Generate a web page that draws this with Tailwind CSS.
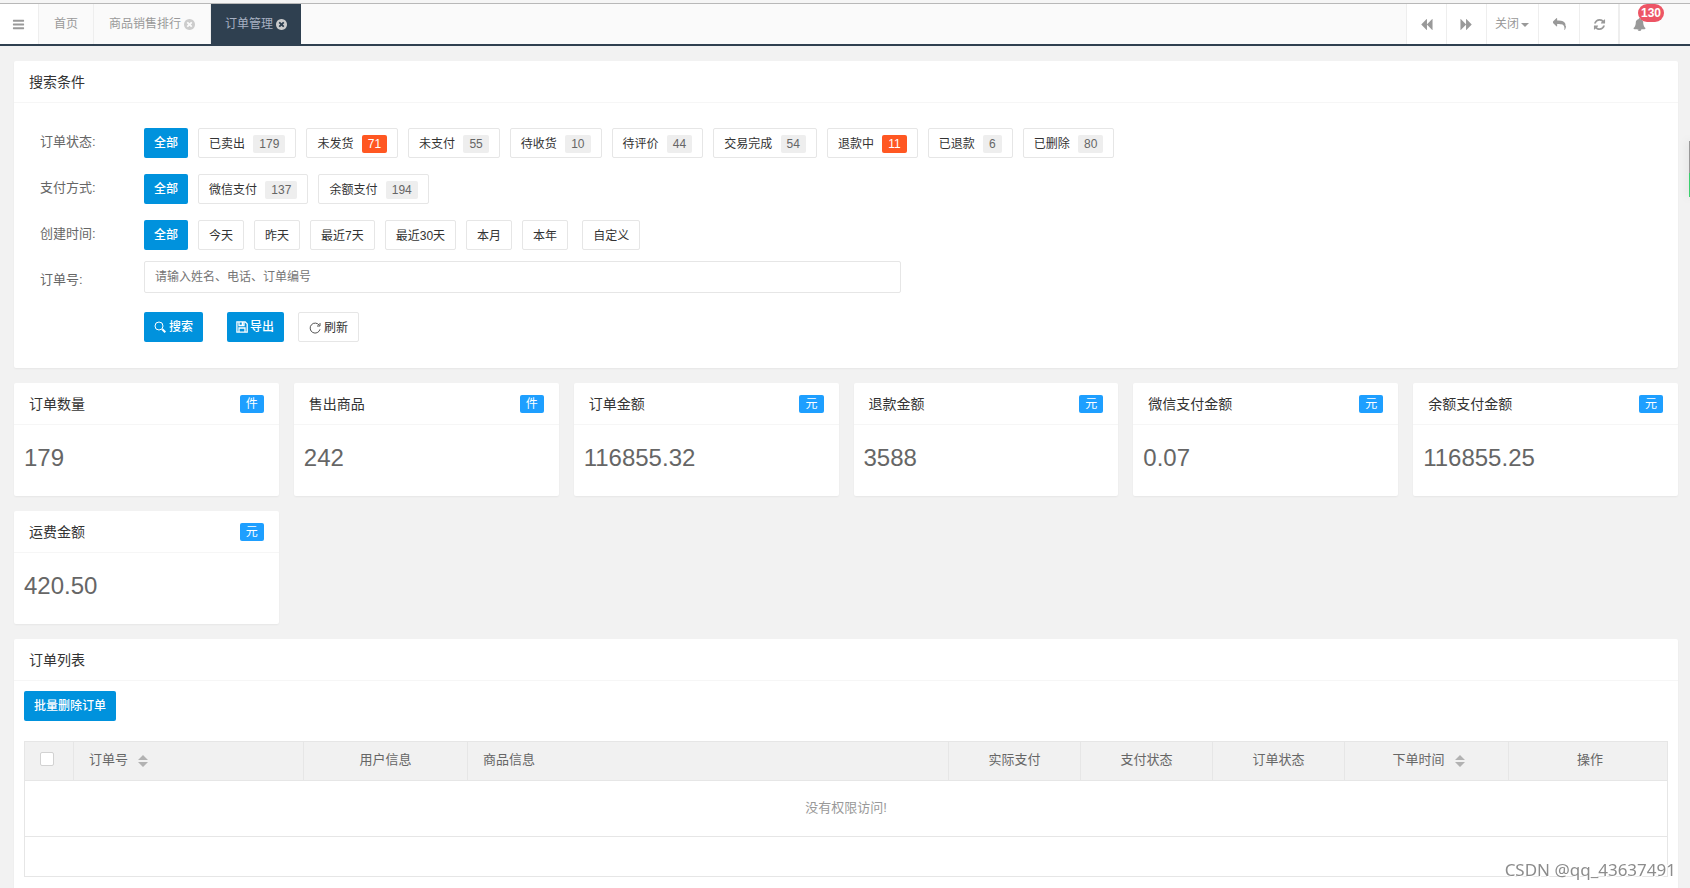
<!DOCTYPE html>
<html lang="zh-CN">
<head>
<meta charset="utf-8">
<meta name="viewport" content="width=device-width, initial-scale=1">
<title>订单管理</title>
<script src="https://cdn.jsdelivr.net/npm/@tailwindcss/browser@4"></script>
</head>
<body class="bg-[#f2f2f2] text-xs text-[#666] font-['Liberation_Sans','Noto_Sans_CJK_SC',sans-serif]">
<svg class="hidden" aria-hidden="true">
  <symbol id="close" viewBox="128 128 1536 1536"><path d="M1277 1122q0-26-19-45l-181-181 181-181q19-19 19-45 0-27-19-46l-90-90q-19-19-46-19-26 0-45 19l-181 181-181-181q-19-19-45-19-27 0-46 19l-90 90q-19 19-19 46 0 26 19 45l181 181-181 181q-19 19-19 45 0 27 19 46l90 90q19 19 46 19 26 0 45-19l181-181 181 181q19 19 45 19 27 0 46-19l90-90q19-19 19-46zm387-226q0 209-103 385.5t-279.5 279.5-385.5 103-385.5-103-279.5-279.5-103-385.5 103-385.5 279.5-279.5 385.5-103 385.5 103 279.5 279.5 103 385.5z"/></symbol>
  <symbol id="sort" viewBox="0 0 10 12"><path d="M5 0l5 5H0zM0 7h10l-5 5z"/></symbol>
</svg>
<div class="flex h-screen flex-col overflow-hidden">
  <header class="flex h-[46px] shrink-0 border-b-2 border-[#2f4050] bg-[#fafafa] text-[#999]">
    <div class="flex w-full flex-col">
      <div class="h-1 shrink-0 border-b border-[#b8b8b8] bg-[#f5f5f5]"></div>
      <div class="flex flex-1">
        <button aria-label="菜单" class="flex w-[39px] items-center border-r border-[#eee] bg-white pl-3">
          <svg class="size-[13px] fill-current" viewBox="0 0 1792 1792"><path d="M1664 1344v128q0 26-19 45t-45 19h-1408q-26 0-45-19t-19-45v-128q0-26 19-45t45-19h1408q26 0 45 19t19 45zm0-512v128q0 26-19 45t-45 19h-1408q-26 0-45-19t-19-45v-128q0-26 19-45t45-19h1408q26 0 45 19t19 45zm0-512v128q0 26-19 45t-45 19h-1408q-26 0-45-19t-19-45v-128q0-26 19-45t45-19h1408q26 0 45 19t19 45z"/></svg>
        </button>
        <nav class="flex flex-1">
          <a href="#" class="flex items-center border-r border-[#eee] px-[15px]">首页</a>
          <a href="#" class="flex items-center gap-[3px] border-r border-[#eee] px-[15px]">商品销售排行<svg class="size-[11px] fill-[#ccc]"><use href="#close"/></svg></a>
          <a href="#" class="flex items-center gap-[3px] bg-[#2f4050] px-3.5 text-[#a7b1c2]">订单管理<svg class="size-[11px] fill-[#ccc]"><use href="#close"/></svg></a>
        </nav>
        <div class="flex pr-[30px]">
          <button aria-label="向左" class="flex w-10 items-center justify-center border-l border-[#eee] bg-white"><svg class="size-[13px] fill-current" viewBox="0 0 1792 1792"><path d="M1683 141q19-19 32-13t13 32v1472q0 26-13 32t-32-13l-710-710q-9-9-13-19v710q0 26-13 32t-32-13l-710-710q-19-19-19-45t19-45l710-710q19-19 32-13t13 32v710q4-10 13-19z"/></svg></button>
          <button aria-label="向右" class="flex w-10 items-center justify-center border-l border-[#eee] bg-white"><svg class="size-[13px] fill-current" viewBox="0 0 1792 1792"><path d="M109 1651q-19 19-32 13t-13-32v-1472q0-26 13-32t32 13l710 710q9 9 13 19v-710q0-26 13-32t32 13l710 710q19 19 19 45t-19 45l-710 710q-19 19-32 13t-13-32v-710q-4 10-13 19z"/></svg></button>
          <button class="flex w-[52px] items-center gap-0.5 border-l border-[#eee] bg-white pl-2">关闭<svg class="mt-0.5 h-1 w-2 fill-current" viewBox="0 0 8 4"><path d="M0 0h8L4 4z"/></svg></button>
          <button aria-label="返回" class="flex w-[41px] items-center justify-center border-l border-[#eee] bg-white"><svg class="size-[13px] fill-current" viewBox="0 0 1792 1792"><path d="M1792 1120q0 166-127 451-3 7-10.5 24t-13.5 30-13 22q-12 17-28 17-15 0-23.5-10t-8.5-25q0-9 2.5-26.500t2.500-23.500q5-68 5-123 0-112-19.500-200.500t-54-153.500-89-112-117.500-77.500-146-43.500-167.500-20.500-189.500-5.500h-224v256q0 26-19 45t-45 19-45-19l-512-512q-19-19-19-45t19-45l512-512q19-19 45-19t45 19 19 45v256h224q713 0 875 403 53 134 53 333z"/></svg></button>
          <button aria-label="刷新页面" class="flex w-[39px] items-center justify-center border-l border-[#eee] bg-white"><svg class="size-[13px] fill-current" viewBox="0 0 1792 1792"><path d="M1639 1056q0 5-1 7-64 268-268 434.500t-478 166.500q-146 0-282.500-55t-243.500-157l-129 129q-19 19-45 19t-45-19-19-45v-448q0-26 19-45t45-19h448q26 0 45 19t19 45-19 45l-137 137q71 66 161 102t187 36q134 0 250-65t186-179q11-17 53-117 8-23 30-23h192q13 0 22.500 9.500t9.500 22.500zm25-800v448q0 26-19 45t-45 19h-448q-26 0-45-19t-19-45 19-45l138-138q-148-137-349-137-134 0-250 65t-186 179q-11 17-53 117-8 23-30 23h-199q-13 0-22.500-9.500t-9.500-22.500v-7q65-268 270-434.500t480-166.500q146 0 284 55.500t245 156.500l130-129q19-19 45-19t45 19 19 45z"/></svg></button>
          <button aria-label="通知" class="relative flex w-[42px] items-center border-l-2 border-[#eee] bg-white pl-[13px]"><svg class="size-[13px] fill-current" viewBox="0 0 1792 1792"><path d="M912 1696q0-16-16-16-59 0-101.500-42.500t-42.500-101.500q0-16-16-16t-16 16q0 73 51.500 124.500t124.500 51.500q16 0 16-16zm816-288q0 52-38 90t-90 38h-448q0 106-75 181t-181 75-181-75-75-181h-448q-52 0-90-38t-38-90q50-42 91-88t85-119.500 74.500-158.500 50-206 19.500-260q0-152 117-282.500t307-158.500q-8-19-8-39 0-40 28-68t68-28 68 28 28 68q0 20-8 39 190 28 307 158.500t117 282.500q0 139 19.500 260t50 206 74.500 158.500 85 119.500 91 88z"/></svg><span class="absolute top-0 -right-1 rounded-full bg-[#ed5565] px-[3px] text-xs leading-[18px] font-bold text-white">130</span></button>
        </div>
      </div>
    </div>
  </header>

  <main class="flex flex-1 flex-col gap-[15px] overflow-hidden pt-[15px] pr-3 pl-3.5">
    <section class="shrink-0 rounded-xs bg-white shadow-[0_1px_2px_rgba(0,0,0,0.05)]">
      <h2 class="h-[42px] border-b border-[#f6f6f6] px-[15px] text-sm leading-[42px] text-[#333]">搜索条件</h2>
      <form class="flex flex-col pt-[25px] pr-5 pb-[26px] pl-[26px]" onsubmit="return false">
        <div class="mb-4 flex">
          <span class="w-[104px] shrink-0 text-[13px] leading-7">订单状态:</span>
          <div class="flex flex-wrap gap-2.5">
            <button class="h-[30px] rounded-xs bg-[#0092dd] px-2.5 font-medium text-white">全部</button>
            <button class="h-[30px] rounded-xs border border-[#e6e6e6] px-2.5 pt-0.5 text-[#333]">已卖出 <span class="ml-[5px] inline-block rounded-xs bg-[#eee] px-1.5 leading-[18px] text-[#666]">179</span></button>
            <button class="h-[30px] rounded-xs border border-[#e6e6e6] px-2.5 pt-0.5 text-[#333]">未发货 <span class="ml-[5px] inline-block rounded-xs bg-[#ff5722] px-1.5 leading-[18px] text-white">71</span></button>
            <button class="h-[30px] rounded-xs border border-[#e6e6e6] px-2.5 pt-0.5 text-[#333]">未支付 <span class="ml-[5px] inline-block rounded-xs bg-[#eee] px-1.5 leading-[18px] text-[#666]">55</span></button>
            <button class="h-[30px] rounded-xs border border-[#e6e6e6] px-2.5 pt-0.5 text-[#333]">待收货 <span class="ml-[5px] inline-block rounded-xs bg-[#eee] px-1.5 leading-[18px] text-[#666]">10</span></button>
            <button class="h-[30px] rounded-xs border border-[#e6e6e6] px-2.5 pt-0.5 text-[#333]">待评价 <span class="ml-[5px] inline-block rounded-xs bg-[#eee] px-1.5 leading-[18px] text-[#666]">44</span></button>
            <button class="h-[30px] rounded-xs border border-[#e6e6e6] px-2.5 pt-0.5 text-[#333]">交易完成 <span class="ml-[5px] inline-block rounded-xs bg-[#eee] px-1.5 leading-[18px] text-[#666]">54</span></button>
            <button class="h-[30px] rounded-xs border border-[#e6e6e6] px-2.5 pt-0.5 text-[#333]">退款中 <span class="ml-[5px] inline-block rounded-xs bg-[#ff5722] px-1.5 leading-[18px] text-white">11</span></button>
            <button class="h-[30px] rounded-xs border border-[#e6e6e6] px-2.5 pt-0.5 text-[#333]">已退款 <span class="ml-[5px] inline-block rounded-xs bg-[#eee] px-1.5 leading-[18px] text-[#666]">6</span></button>
            <button class="h-[30px] rounded-xs border border-[#e6e6e6] px-2.5 pt-0.5 text-[#333]">已删除 <span class="ml-[5px] inline-block rounded-xs bg-[#eee] px-1.5 leading-[18px] text-[#666]">80</span></button>
          </div>
        </div>
        <div class="mb-4 flex">
          <span class="w-[104px] shrink-0 text-[13px] leading-7">支付方式:</span>
          <div class="flex flex-wrap gap-2.5">
            <button class="h-[30px] rounded-xs bg-[#0092dd] px-2.5 font-medium text-white">全部</button>
            <button class="h-[30px] rounded-xs border border-[#e6e6e6] px-2.5 pt-0.5 text-[#333]">微信支付 <span class="ml-[5px] inline-block rounded-xs bg-[#eee] px-1.5 leading-[18px] text-[#666]">137</span></button>
            <button class="h-[30px] rounded-xs border border-[#e6e6e6] px-2.5 pt-0.5 text-[#333]">余额支付 <span class="ml-[5px] inline-block rounded-xs bg-[#eee] px-1.5 leading-[18px] text-[#666]">194</span></button>
          </div>
        </div>
        <div class="mb-[11px] flex">
          <span class="w-[104px] shrink-0 text-[13px] leading-7">创建时间:</span>
          <div class="flex flex-wrap gap-2.5">
            <button class="h-[30px] rounded-xs bg-[#0092dd] px-2.5 font-medium text-white">全部</button>
            <button class="h-[30px] rounded-xs border border-[#e6e6e6] px-2.5 pt-0.5 text-[#333]">今天</button>
            <button class="h-[30px] rounded-xs border border-[#e6e6e6] px-2.5 pt-0.5 text-[#333]">昨天</button>
            <button class="h-[30px] rounded-xs border border-[#e6e6e6] px-2.5 pt-0.5 text-[#333]">最近7天</button>
            <button class="h-[30px] rounded-xs border border-[#e6e6e6] px-2.5 pt-0.5 text-[#333]">最近30天</button>
            <button class="h-[30px] rounded-xs border border-[#e6e6e6] px-2.5 pt-0.5 text-[#333]">本月</button>
            <button class="h-[30px] rounded-xs border border-[#e6e6e6] px-2.5 pt-0.5 text-[#333]">本年</button>
            <button class="ml-1 h-[30px] rounded-xs border border-[#e6e6e6] px-2.5 pt-0.5 text-[#333]">自定义</button>
          </div>
        </div>
        <div class="mb-[18px] flex">
          <label for="keyword" class="w-[104px] shrink-0 pt-[5px] text-[13px] leading-7">订单号:</label>
          <div class="flex-1"><input id="keyword" type="text" placeholder="请输入姓名、电话、订单编号" class="block h-8 w-1/2 rounded-xs border border-[#e6e6e6] px-2.5 placeholder:text-[#757575]"></div>
        </div>
        <div class="flex h-[30px] pl-[104px]">
          <button class="flex items-center gap-[3px] rounded-xs bg-[#0092dd] px-2.5 font-medium text-white"><svg class="size-3 fill-none stroke-current" viewBox="0 0 12 12"><circle cx="5" cy="5" r="4"/><path stroke-width="2" d="M8.300 8.300L11.300 11.300"/></svg>搜索</button>
          <button class="ml-6 flex items-center gap-0.5 rounded-xs bg-[#0092dd] px-[9px] pr-2.5 font-medium text-white"><svg class="size-3 fill-none stroke-current" viewBox="0 0 12 12"><path stroke-width="1.300" d="M.9.9h8.300l2 2v8.300H.9zM3 1v3.500h5V1M3 11V7h6v4"/><path stroke-width="1.500" d="M6.500 1v3"/></svg>导出</button>
          <button class="ml-3.5 flex items-center gap-[3px] rounded-xs border border-[#e6e6e6] px-2.5 pt-0.5 text-[#333]"><svg class="size-3 fill-none stroke-[#555]" viewBox="0 0 12 12"><path d="M11 7.300A5 5 0 1 1 10.300 3.300M11 1v3H8"/></svg>刷新</button>
        </div>
      </form>
    </section>

    <section class="grid shrink-0 grid-cols-6 gap-[15px]">
      <article class="rounded-xs bg-white shadow-[0_1px_2px_rgba(0,0,0,0.05)]"><h2 class="flex h-[42px] items-center justify-between border-b border-[#f6f6f6] px-[15px] text-sm text-[#333]">订单数量<span class="rounded-xs bg-[#1e9fff] px-1.5 text-xs leading-[18px] text-white">件</span></h2><p class="px-2.5 pt-[15px] pb-5 text-2xl leading-9">179</p></article>
      <article class="rounded-xs bg-white shadow-[0_1px_2px_rgba(0,0,0,0.05)]"><h2 class="flex h-[42px] items-center justify-between border-b border-[#f6f6f6] px-[15px] text-sm text-[#333]">售出商品<span class="rounded-xs bg-[#1e9fff] px-1.5 text-xs leading-[18px] text-white">件</span></h2><p class="px-2.5 pt-[15px] pb-5 text-2xl leading-9">242</p></article>
      <article class="rounded-xs bg-white shadow-[0_1px_2px_rgba(0,0,0,0.05)]"><h2 class="flex h-[42px] items-center justify-between border-b border-[#f6f6f6] px-[15px] text-sm text-[#333]">订单金额<span class="rounded-xs bg-[#1e9fff] px-1.5 text-xs leading-[18px] text-white">元</span></h2><p class="px-2.5 pt-[15px] pb-5 text-2xl leading-9">116855.32</p></article>
      <article class="rounded-xs bg-white shadow-[0_1px_2px_rgba(0,0,0,0.05)]"><h2 class="flex h-[42px] items-center justify-between border-b border-[#f6f6f6] px-[15px] text-sm text-[#333]">退款金额<span class="rounded-xs bg-[#1e9fff] px-1.5 text-xs leading-[18px] text-white">元</span></h2><p class="px-2.5 pt-[15px] pb-5 text-2xl leading-9">3588</p></article>
      <article class="rounded-xs bg-white shadow-[0_1px_2px_rgba(0,0,0,0.05)]"><h2 class="flex h-[42px] items-center justify-between border-b border-[#f6f6f6] px-[15px] text-sm text-[#333]">微信支付金额<span class="rounded-xs bg-[#1e9fff] px-1.5 text-xs leading-[18px] text-white">元</span></h2><p class="px-2.5 pt-[15px] pb-5 text-2xl leading-9">0.07</p></article>
      <article class="rounded-xs bg-white shadow-[0_1px_2px_rgba(0,0,0,0.05)]"><h2 class="flex h-[42px] items-center justify-between border-b border-[#f6f6f6] px-[15px] text-sm text-[#333]">余额支付金额<span class="rounded-xs bg-[#1e9fff] px-1.5 text-xs leading-[18px] text-white">元</span></h2><p class="px-2.5 pt-[15px] pb-5 text-2xl leading-9">116855.25</p></article>
      <article class="rounded-xs bg-white shadow-[0_1px_2px_rgba(0,0,0,0.05)]"><h2 class="flex h-[42px] items-center justify-between border-b border-[#f6f6f6] px-[15px] text-sm text-[#333]">运费金额<span class="rounded-xs bg-[#1e9fff] px-1.5 text-xs leading-[18px] text-white">元</span></h2><p class="px-2.5 pt-[15px] pb-5 text-2xl leading-9">420.50</p></article>
    </section>

    <section class="shrink-0 rounded-xs bg-white shadow-[0_1px_2px_rgba(0,0,0,0.05)]">
      <h2 class="h-[42px] border-b border-[#f6f6f6] px-[15px] text-sm leading-[42px] text-[#333]">订单列表</h2>
      <div class="px-2.5 pt-2.5 pb-5">
        <button class="mb-5 block h-[30px] rounded-xs bg-[#0092dd] px-2.5 font-medium text-white">批量删除订单</button>
        <table class="w-full table-fixed border-collapse border border-[#e6e6e6] text-[13px]">
          <colgroup><col class="w-[49px]"><col class="w-[230px]"><col class="w-[164px]"><col><col class="w-[132px]"><col class="w-[132px]"><col class="w-[132px]"><col class="w-[164px]"><col class="w-[159px]"></colgroup>
          <thead>
            <tr class="h-[39px] bg-[#f1f1f1] *:border *:border-[#e6e6e6] *:p-0 *:pb-0.5 *:font-normal">
              <th><input type="checkbox" aria-label="全选" class="mb-0.5 ml-[15px] block size-3.5 appearance-none rounded-xs border border-[#d2d2d2] bg-white"></th>
              <th><div class="flex items-center gap-2.5 pl-[15px]">订单号<svg class="mt-0.5 h-3 w-2.5 fill-[#b2b2b2]"><use href="#sort"/></svg></div></th>
              <th>用户信息</th>
              <th><div class="pl-[15px] text-left">商品信息</div></th>
              <th>实际支付</th>
              <th>支付状态</th>
              <th>订单状态</th>
              <th><div class="flex items-center justify-center gap-2.5 pl-1">下单时间<svg class="mt-0.5 h-3 w-2.5 fill-[#b2b2b2]"><use href="#sort"/></svg></div></th>
              <th><div class="pl-1">操作</div></th>
            </tr>
          </thead>
          <tbody>
            <tr class="h-14"><td colspan="9" class="border border-[#e6e6e6] p-0 pb-0.5 text-center text-[#999]">没有权限访问!</td></tr>
            <tr class="h-10"><td colspan="9" class="border border-[#e6e6e6] p-0"></td></tr>
          </tbody>
        </table>
      </div>
    </section>
  </main>
</div>

<!-- Floating side widget and watermark -->
<div class="fixed top-[141px] right-0 flex h-14 w-px flex-col shadow-[0_0_8px_rgba(0,0,0,0.35)]"><div class="h-8 bg-[#999]"></div><div class="flex-1 bg-[#3ccf6e]"></div></div>
<div class="fixed right-3.5 bottom-1.5 text-[17px] leading-6 text-[#8c8c8c] font-['Noto_Sans',sans-serif] [text-shadow:1px_1px_0_#fff,-1px_-1px_0_#fff]">CSDN @qq_43637491</div>
</body>
</html>
